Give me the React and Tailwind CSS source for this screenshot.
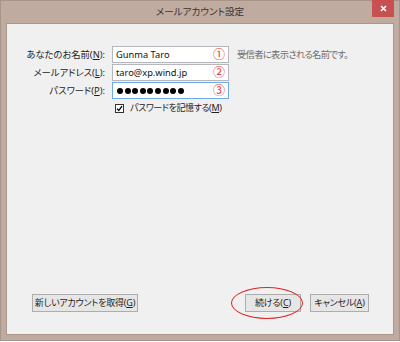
import React from "react";

const font = "font-['Noto_Sans','Noto_Sans_CJK_JP',sans-serif] [font-feature-settings:'palt']";

const Field = ({ label, keyChar, children, mark, focused, hint }) => (
  <div className="flex h-[17px] items-center">
    <label className="w-[98px] whitespace-nowrap text-right text-[9.3px] text-[#1e1e1e]">
      {label}(<span className="underline">{keyChar}</span>):
    </label>
    <div
      className={`ml-[7px] flex h-[17px] w-[117px] items-center justify-between bg-white pl-[3px] pr-[3px] ${
        focused ? "border border-[#6fa9e6]" : "border border-[#b5b7bd]"
      }`}
    >
      <div className="flex items-center whitespace-nowrap text-[9.3px] text-[#111]">{children}</div>
      <span className="text-[12px] leading-none text-[#e5322d]">{mark}</span>
    </div>
    {hint && (
      <span className="ml-[8px] whitespace-nowrap text-[9.3px] tracking-[-0.7px] text-[#6d6d6d]">{hint}</span>
    )}
  </div>
);

const Button = ({ label, keyChar, className = "" }) => (
  <button
    className={`flex h-[18px] items-center justify-center whitespace-nowrap border border-[#adadad] bg-[#e6e6e6] text-[9px] tracking-[-0.2px] text-[#1e1e1e] ${className}`}
  >
    {label}(<span className="underline">{keyChar}</span>)
  </button>
);

export default function App() {
  return (
    <div className={`${font} h-[342px] w-[400px] bg-white`}>
      <div className="flex h-[341px] w-[400px] flex-col border border-[#a8958a] bg-[#bfab9f]">
        {/* Title bar */}
        <div className="relative flex h-[22px] items-center justify-center">
          <span className="text-[9.6px] text-[#3a3330]">メールアカウント設定</span>
          <div className="absolute right-[5px] top-[-1px] flex h-[17px] w-[22px] items-center justify-center bg-[#c75050]">
            <svg width="7" height="7" viewBox="0 0 7 7">
              <path d="M1 1L6 6M6 1L1 6" stroke="white" strokeWidth="1.6" />
            </svg>
          </div>
        </div>

        {/* Client area */}
        <div className="mx-[5px] mb-[5px] flex flex-1 flex-col border border-[#aa978b] bg-[#f0f0f0]">
          <div className="flex flex-col gap-[1px] pt-[22px]">
            <Field label="あなたのお名前" keyChar="N" mark="①" hint="受信者に表示される名前です。">
              Gunma Taro
            </Field>
            <Field label="メールアドレス" keyChar="L" mark="②">
              taro@xp.wind.jp
            </Field>
            <Field label="パスワード" keyChar="P" mark="③" focused>
              <div className="flex gap-[1.6px] pl-[1px]">
                {Array.from({ length: 9 }).map((_, i) => (
                  <span key={i} className="h-[6px] w-[6px] rounded-full bg-black" />
                ))}
              </div>
            </Field>
            <div className="flex h-[16px] items-center pl-[108px]">
              <span className="flex h-[9px] w-[9px] items-center justify-center border border-[#333] bg-white">
                <svg width="7" height="7" viewBox="0 0 7 7">
                  <path d="M1 3.6L2.8 5.5L6 1.2" fill="none" stroke="black" strokeWidth="1.3" />
                </svg>
              </span>
              <span className="ml-[6px] whitespace-nowrap text-[9px] tracking-[-0.4px] text-[#1e1e1e]">
                パスワードを記憶する(<span className="underline">M</span>)
              </span>
            </div>
          </div>

          <div className="flex-1" />

          <div className="flex items-center justify-between pb-[22px] pl-[25px] pr-[24px]">
            <Button label="新しいアカウントを取得" keyChar="G" className="w-[106px]" />
            <div className="flex gap-[9px]">
              <div className="relative">
                <Button label="続ける" keyChar="C" className="w-[56px]" />
                <div className="absolute left-[-14px] top-[-7px] h-[32px] w-[72px] rounded-[50%] border-[1.5px] border-[#e02424]" />
              </div>
              <Button label="キャンセル" keyChar="A" className="w-[59px]" />
            </div>
          </div>
        </div>
      </div>
    </div>
  );
}
